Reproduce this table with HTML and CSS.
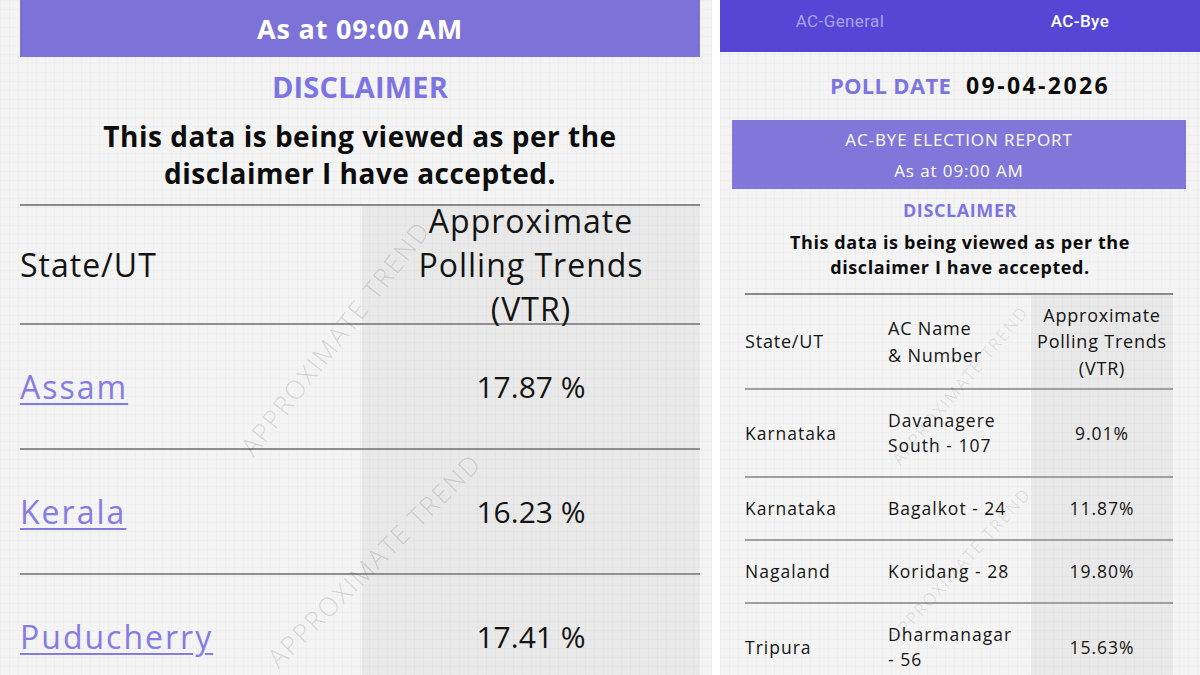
FILE: index.html
```html
<!DOCTYPE html>
<html lang="en">
<head>
<meta charset="utf-8">
<title>Approximate Polling Trends</title>
<link rel="stylesheet" href="styles.css">
</head>
<body>
<div class="panel left">
  <div class="lcontent">
    <div class="bar">As at 09:00 AM</div>
    <div class="disc-title">DISCLAIMER</div>
    <div class="disc-text">This data is being viewed as per the<br>disclaimer I have accepted.</div>
    <div class="ltable">
      <div class="lrow lhead">
        <div class="lc1">State/UT</div>
        <div class="lc2"><div class="vtr">Approximate<br>Polling Trends<br>(VTR)</div></div>
      </div>
      <div class="lrow">
        <div class="lc1"><a href="#" class="link">Assam</a></div>
        <div class="lc2">17.87 %</div>
      </div>
      <div class="lrow">
        <div class="lc1"><a href="#" class="link">Kerala</a></div>
        <div class="lc2">16.23 %</div>
      </div>
      <div class="lrow">
        <div class="lc1"><a href="#" class="link">Puducherry</a></div>
        <div class="lc2">17.41 %</div>
      </div>
    </div>
  </div>
  <div class="wm wm-l1">APPROXIMATE TREND</div>
  <div class="wm wm-l2">APPROXIMATE TREND</div>
</div>
<div class="panel right">
  <div class="tabs">
    <div class="tab">AC-General</div>
    <div class="tab active">AC-Bye</div>
  </div>
  <div class="poll"><span class="poll-label">POLL DATE</span><span class="poll-date">09-04-2026</span></div>
  <div class="report">AC-BYE ELECTION REPORT<br>As at 09:00 AM</div>
  <div class="rdisc-title">DISCLAIMER</div>
  <div class="rdisc-text">This data is being viewed as per the<br>disclaimer I have accepted.</div>
  <div class="rtable">
    <div class="rrow rhead">
      <div class="rc">State/UT</div>
      <div class="rc">AC Name<br>&amp; Number</div>
      <div class="rc rv">Approximate<br>Polling Trends<br>(VTR)</div>
    </div>
    <div class="rrow">
      <div class="rc">Karnataka</div>
      <div class="rc">Davanagere<br>South - 107</div>
      <div class="rc rv">9.01%</div>
    </div>
    <div class="rrow">
      <div class="rc">Karnataka</div>
      <div class="rc">Bagalkot - 24</div>
      <div class="rc rv">11.87%</div>
    </div>
    <div class="rrow">
      <div class="rc">Nagaland</div>
      <div class="rc">Koridang - 28</div>
      <div class="rc rv">19.80%</div>
    </div>
    <div class="rrow">
      <div class="rc">Tripura</div>
      <div class="rc">Dharmanagar<br>- 56</div>
      <div class="rc rv">15.63%</div>
    </div>
  </div>
  <div class="wm wm-r wm-r1">APPROXIMATE TREND</div>
  <div class="wm wm-r wm-r2">APPROXIMATE TREND</div>
</div>
</body>
</html>
```
FILE: styles.css
```css
html, body {
  margin: 0;
  padding: 0;
}
body {
  width: 1200px;
  height: 675px;
  overflow: hidden;
  display: flex;
  gap: 8px;
  background: #ffffff;
  font-family: "Open Sans", "Noto Sans", sans-serif;
  color: #141414;
}
.panel {
  position: relative;
  overflow: hidden;
  background-color: #f4f4f4;
  background-image:
    linear-gradient(to right, rgba(0,0,0,0.018) 1px, transparent 1px),
    linear-gradient(to bottom, rgba(0,0,0,0.018) 1px, transparent 1px);
  background-size: 9px 9px;
}
.left {
  width: 692px;
  padding-left: 20px;
  flex: none;
}
.lcontent {
  width: 680px;
}
.bar {
  height: 57px;
  background: #7d72d7;
  color: #ffffff;
  font-weight: 700;
  font-size: 27px;
  letter-spacing: 0.8px;
  line-height: 57px;
  text-align: center;
}
.disc-title {
  margin-top: 12px;
  line-height: 36px;
  font-size: 29px;
  font-weight: 700;
  color: #7c74e2;
  text-align: center;
  letter-spacing: 0.2px;
}
.disc-text {
  margin-top: 13px;
  line-height: 37px;
  font-size: 28px;
  letter-spacing: 0.5px;
  font-weight: 700;
  color: #0c0c0c;
  text-align: center;
}
.ltable {
  margin-top: 12px;
  border-top: 2px solid #8a8a8a;
}
.lrow {
  display: grid;
  grid-template-columns: 342px 338px;
  grid-template-rows: minmax(0, 1fr);
  height: 123px;
  border-bottom: 2px solid #8f8f8f;
  font-size: 30px;
}
.lhead {
  height: 117px;
  font-size: 32px;
  letter-spacing: 1px;
}
.lc1 {
  display: flex;
  align-items: center;
  min-height: 0;
}
.lc2 {
  display: flex;
  align-items: center;
  justify-content: center;
  min-height: 0;
  background: rgba(0,0,0,0.045);
  text-align: center;
}
.vtr {
  line-height: 44px;
}
.link {
  color: #857ce3;
  font-size: 32px;
  letter-spacing: 2px;
  text-decoration: underline;
  text-decoration-thickness: 2px;
  text-underline-offset: 4px;
}
.wm {
  position: absolute;
  white-space: nowrap;
  color: rgba(0,0,0,0.14);
  font-weight: 300;
  font-size: 26px;
  letter-spacing: 2px;
  transform: translate(-50%, -50%) rotate(-52deg);
  pointer-events: none;
}
.wm-l1 { left: 335px; top: 338px; }
.wm-l2 { left: 374px; top: 560px; transform: translate(-50%, -50%) rotate(-45deg); }

.right {
  width: 480px;
  flex: none;
}
.tabs {
  height: 52px;
  background: #5546d6;
  display: grid;
  grid-template-columns: 1fr 1fr;
  font-family: Roboto, "Open Sans", sans-serif;
  font-size: 17px;
  letter-spacing: 0.4px;
}
.tab {
  text-align: center;
  padding-top: 11px;
  line-height: 20px;
  color: #aaa3ee;
}
.tab.active {
  color: #ffffff;
  font-weight: 500;
}
.poll {
  margin-top: 18px;
  padding-left: 20px;
  line-height: 30px;
  text-align: center;
  font-weight: 700;
  font-size: 22px;
}
.poll-label {
  color: #7d74e2;
  letter-spacing: 0.3px;
  margin-right: 15px;
}
.poll-date {
  color: #0c0c0c;
  font-size: 23px;
  letter-spacing: 2.4px;
}
.report {
  margin: 20px 14px 0 12px;
  height: 65px;
  padding-top: 4px;
  background: #8176d9;
  color: #ffffff;
  font-size: 17px;
  letter-spacing: 0.9px;
  line-height: 31px;
  text-align: center;
}
.rdisc-title {
  margin-top: 10px;
  line-height: 22px;
  font-size: 18px;
  letter-spacing: 0.6px;
  font-weight: 700;
  color: #7c74e2;
  text-align: center;
}
.rdisc-text {
  margin-top: 9px;
  line-height: 25px;
  font-size: 18px;
  letter-spacing: 0.6px;
  font-weight: 700;
  color: #0c0c0c;
  text-align: center;
}
.rtable {
  margin: 13px 27px 0 25px;
  border-top: 2px solid #8a8a8a;
}
.rrow {
  display: grid;
  grid-template-columns: 143px 143px 142px;
  border-bottom: 2px solid #a0a0a0;
  font-size: 17.5px;
  letter-spacing: 1px;
  line-height: 25px;
}
.rhead {
  height: 93px;
  font-size: 18px;
  letter-spacing: 0.8px;
  line-height: 26.5px;
}
.rc {
  display: flex;
  align-items: center;
  padding: 18px 0;
  white-space: nowrap;
}
.rhead .rc {
  padding: 0;
}
.rv {
  justify-content: center;
  text-align: center;
  background: rgba(0,0,0,0.045);
}
.wm-r {
  font-size: 17px;
  letter-spacing: 2px;
  transform: translate(-50%, -50%) rotate(-50deg);
}
.wm-r1 { left: 240px; top: 385px; }
.wm-r2 { left: 240px; top: 565px; transform: translate(-50%, -50%) rotate(-48deg); }
```
